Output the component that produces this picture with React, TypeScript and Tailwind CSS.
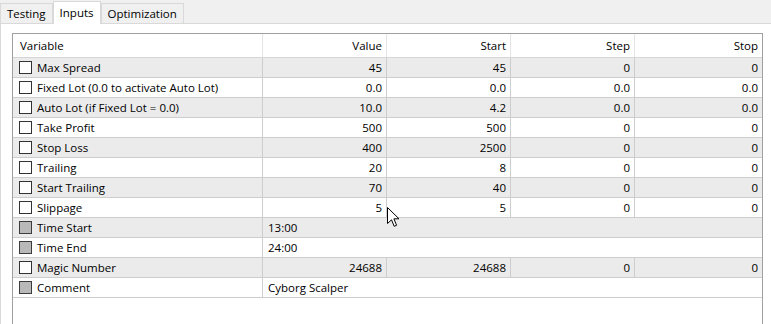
import React from 'react';

type Row = {
  name: string;
  value: string;
  start?: string;
  step?: string;
  stop?: string;
  locked?: boolean;
};

const rows: Row[] = [
  { name: 'Max Spread', value: '45', start: '45', step: '0', stop: '0' },
  { name: 'Fixed Lot (0.0 to activate Auto Lot)', value: '0.0', start: '0.0', step: '0.0', stop: '0.0' },
  { name: 'Auto Lot (if Fixed Lot = 0.0)', value: '10.0', start: '4.2', step: '0.0', stop: '0.0' },
  { name: 'Take Profit', value: '500', start: '500', step: '0', stop: '0' },
  { name: 'Stop Loss', value: '400', start: '2500', step: '0', stop: '0' },
  { name: 'Trailing', value: '20', start: '8', step: '0', stop: '0' },
  { name: 'Start Trailing', value: '70', start: '40', step: '0', stop: '0' },
  { name: 'Slippage', value: '5', start: '5', step: '0', stop: '0' },
  { name: 'Time Start', value: '13:00', locked: true },
  { name: 'Time End', value: '24:00', locked: true },
  { name: 'Magic Number', value: '24688', start: '24688', step: '0', stop: '0' },
  { name: 'Comment', value: 'Cyborg Scalper', locked: true },
];

const grid = 'grid grid-cols-[249px_124px_124px_124px_1fr]';

const Checkbox = ({ locked }: { locked?: boolean }) => (
  <span
    className={
      locked
        ? 'w-[13px] h-[13px] border border-[#3c3c3c] bg-[#b9b9b9] shrink-0'
        : 'w-[13px] h-[13px] border border-[#333333] bg-white shrink-0'
    }
  />
);

const Tab = ({ label, active }: { label: string; active?: boolean }) => (
  <div
    className={
      active
        ? 'h-[23px] px-[6px] bg-white border border-b-0 border-[#d9d9d9] flex items-center -mb-px relative z-10'
        : 'h-[20px] px-[6px] bg-[#f0f0f0] border border-b-0 border-[#d9d9d9] flex items-center'
    }
  >
    {label}
  </div>
);

export default function App() {
  return (
    <div
      className="w-[771px] h-[324px] bg-[#f0f0f0] overflow-hidden relative flex flex-col text-[11.5px] text-black"
      style={{ fontFamily: '"Segoe UI", "Open Sans", "Liberation Sans", sans-serif' }}
    >
      {/* Tabs */}
      <div className="h-[23px] flex items-end shrink-0">
        <Tab label="Testing" />
        <Tab label="Inputs" active />
        <Tab label="Optimization" />
      </div>

      {/* Panel */}
      <div className="flex-1 bg-white border-t border-l border-[#d9d9d9] pl-[11px] pt-[9px]">
        <div className="w-[751px] h-[400px] border border-[#a0a0a0] bg-white">
          {/* Header */}
          <div className={`${grid} h-[24px] border-b border-[#d5d5d5]`}>
            <div className="flex items-center pl-[7px]">Variable</div>
            {['Value', 'Start', 'Step', 'Stop'].map((h) => (
              <div key={h} className="flex items-center justify-end pr-[4px] border-l border-[#e5e5e5]">
                {h}
              </div>
            ))}
          </div>

          {rows.map((r, i) => (
            <div
              key={r.name}
              className={`${grid} h-[20px] border-b border-[#cdcdcd] ${i % 2 === 0 ? 'bg-[#ebebeb]' : 'bg-white'}`}
            >
              <div className="flex items-center gap-[5px] pl-[6px]">
                <Checkbox locked={r.locked} />
                <span>{r.name}</span>
              </div>
              {r.locked ? (
                <div className="col-span-4 flex items-center pl-[5px] border-l border-[#cdcdcd]">{r.value}</div>
              ) : (
                [r.value, r.start, r.step, r.stop].map((v, j) => (
                  <div key={j} className="flex items-center justify-end pr-[4px] border-l border-[#cdcdcd]">
                    {v}
                  </div>
                ))
              )}
            </div>
          ))}
        </div>
      </div>

      {/* Mouse pointer */}
      <svg className="absolute left-[387px] top-[207px]" width="13" height="21" viewBox="0 0 13 21">
        <path
          d="M0.5 0.5 L0.5 16.5 L4.5 12.8 L7.2 19.3 L9.6 18.3 L6.9 11.8 L12 11.8 Z"
          fill="white"
          stroke="black"
          strokeWidth="1"
          strokeLinejoin="miter"
        />
      </svg>
    </div>
  );
}
